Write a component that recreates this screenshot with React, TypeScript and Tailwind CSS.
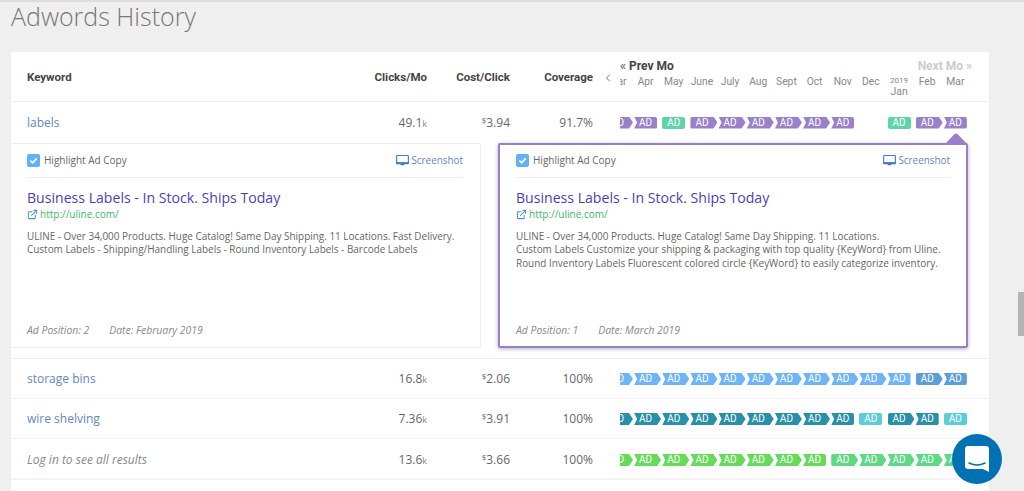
import { ChevronLeft, ExternalLink } from "lucide-react";

const OPEN = "font-['Open_Sans',sans-serif]";
const ROBOTO = "font-['Roboto',sans-serif]";

const shapes: Record<string, string> = {
  s: "w-[23px] rounded-[2px]",
  a: "w-[27px] rounded-l-[2px] [clip-path:polygon(0_0,23px_0,27px_6px,23px_12px,0_12px)]",
  m: "w-[27px] [clip-path:polygon(0_0,23px_0,27px_6px,23px_12px,0_12px,3px_6px)]",
  e: "w-[23px] rounded-r-[2px] [clip-path:polygon(0_0,23px_0,23px_12px,0_12px,3px_6px)]",
};

const colors: Record<string, string> = {
  p: "bg-[#9a80c9]",
  g: "bg-[#5fd4a9]",
  b: "bg-[#6eb4f7]",
  d: "bg-[#5c9fd6]",
  t: "bg-[#2a90a9]",
  l: "bg-[#5ccdd6]",
  v: "bg-[#67da5c]",
  w: "bg-[#5dd884]",
};

const MONTHS = ["Mar", "Apr", "May", "June", "July", "Aug", "Sept", "Oct", "Nov", "Dec", "Jan", "Feb", "Mar"];

function Badge({ spec }: { spec: string }) {
  if (spec === "-") return <div className="w-[28.17px] shrink-0" />;
  return (
    <div className="w-[28.17px] shrink-0">
      <div
        className={`h-3 flex items-center ${ROBOTO} text-[10px] leading-3 text-white ${shapes[spec[0]]} ${colors[spec[1]]}`}
      >
        <span className="w-[23px] text-center">AD</span>
      </div>
    </div>
  );
}

function Badges({ specs }: { specs: string }) {
  return (
    <div className="w-[352px] flex justify-end overflow-hidden">
      {specs.split(" ").map((s, i) => (
        <Badge key={i} spec={s} />
      ))}
    </div>
  );
}

function Row({
  name,
  clicks,
  cost,
  coverage,
  specs,
  muted,
  cls,
}: {
  name: string;
  clicks: string;
  cost: string;
  coverage: string;
  specs: string;
  muted?: boolean;
  cls: string;
}) {
  return (
    <div className={`flex items-center ${OPEN} text-[12px] text-[#666] ${cls}`}>
      <div className="w-[200px] pl-4">
        {muted ? (
          <span className="italic text-[#888]">{name}</span>
        ) : (
          <span className="text-[#6286c6]">{name}</span>
        )}
      </div>
      <div className="w-[216px] text-right">
        {clicks}
        <span className="text-[9px] text-[#888]">k</span>
      </div>
      <div className="w-[83px] text-right">
        <sup className="text-[8px]">$</sup>
        {cost}
      </div>
      <div className="w-[83px] text-right">{coverage}</div>
      <div className="w-[27px]" />
      <Badges specs={specs} />
    </div>
  );
}

function Monitor() {
  return (
    <svg viewBox="0 0 14 12" className="w-[13px] h-[11px]">
      <rect x="0.6" y="0.6" width="12.8" height="8.3" rx="0.8" fill="none" stroke="#3f78c4" strokeWidth="1.2" />
      <path d="M0 8h14v1.2a.8.8 0 0 1-.8.8H.8a.8.8 0 0 1-.8-.8zM5 10h4v1.2H5z" fill="#3f78c4" />
    </svg>
  );
}

function AdPanel({
  lines,
  pos,
  date,
  featured,
}: {
  lines: string[];
  pos: string;
  date: string;
  featured?: boolean;
}) {
  return (
    <div
      className={`relative w-[470px] h-[205px] flex flex-col bg-white ${OPEN} ${
        featured
          ? "border-2 border-[#9a80c9] shadow-[0_1px_4px_rgba(0,0,0,0.3)] rounded-[2px] px-[16px] pt-[8px] pb-[7px]"
          : "border border-[#eeeeee] rounded-r-[2px] border-l-0 pl-4 pr-[17px] pt-[9px] pb-[8px]"
      }`}
    >
      {featured && (
        <svg viewBox="0 0 24 12" className="absolute -top-[12px] right-[-2px] w-6 h-3">
          <path d="M0 12 L10.5 1 Q12 0 13.5 1 L24 12 Z" fill="#9a80c9" />
        </svg>
      )}
      <div className="flex items-center justify-between h-[14px] border-b border-[#eeeeee] pb-[10px] box-content">
        <div className="flex items-center gap-[4px] text-[10px] text-[#666]">
          <span className="w-[13px] h-[13px] rounded-[2px] bg-[#62b1f6] flex items-center justify-center">
            <svg viewBox="0 0 10 10" className="w-[9px] h-[9px]">
              <path d="M1.5 5.2 L4 7.6 L8.6 2.6" fill="none" stroke="#fff" strokeWidth="1.8" />
            </svg>
          </span>
          Highlight Ad Copy
        </div>
        <div className="flex items-center gap-[2px] text-[9.9px] text-[#6286c6]">
          <Monitor />
          Screenshot
        </div>
      </div>
      <div className="mt-[11px] text-[14.1px] leading-[18px] text-[#4b3fb3]">Business Labels - In Stock. Ships Today</div>
      <div className="flex items-center gap-[2px] text-[10px] leading-[14px] text-[#3fb56a]">
        <ExternalLink size={11} strokeWidth={2.2} className="text-[#4f8fd0]" />
        http://uline.com/
      </div>
      <div className="mt-[9px] text-[9.95px] leading-[13.3px] text-[#666]">
        {lines.map((l) => (
          <div key={l}>{l}</div>
        ))}
      </div>
      <div className="mt-auto flex gap-[20px] text-[10.4px] italic text-[#888]">
        <span>Ad Position: {pos}</span>
        <span>Date: {date}</span>
      </div>
    </div>
  );
}

export default function App() {
  return (
    <div className="relative h-[491px] w-[1024px] overflow-hidden bg-[#efefef] border-t-2 border-[#dddddd]">
      <h1 className={`pl-[11px] pt-[2px] h-[50px] ${OPEN} font-light text-[25px] leading-[24px] text-[#777]`}>
        Adwords History
      </h1>

      <div className="ml-[11px] w-[978px] h-[500px] bg-white rounded-t-[2px]">
        <div className={`flex h-[50px] pt-[2px] border-b border-[#eeeeee] ${ROBOTO} text-[11.5px] font-bold text-[#444]`}>
          <div className="w-[200px] pl-4 self-center">Keyword</div>
          <div className="w-[216px] text-right self-center">Clicks/Mo</div>
          <div className="w-[83px] text-right self-center">Cost/Click</div>
          <div className="w-[83px] text-right self-center">Coverage</div>
          <div className="w-[27px] self-center pl-[9px]">
            <ChevronLeft size={12} className="text-[#4f80c8]" strokeWidth={2} />
          </div>
          <div className="w-[352px] pt-[5px]">
            <div className="flex justify-between text-[12px] leading-[14px]">
              <span>
                <span className="text-[#777]">«</span> Prev Mo
              </span>
              <span className="text-[#cccccc]">Next Mo »</span>
            </div>
            <div className="flex justify-end overflow-hidden mt-[2px] font-normal text-[10.3px] leading-[13px] text-[#888]">
              {MONTHS.map((m, i) => (
                <div key={i} className="w-[28.17px] shrink-0">
                  <div className="w-[23px] flex flex-col items-center">
                    {m === "Jan" && <span className="text-[8px] leading-[9px] mt-[1px]">2019</span>}
                    <span className={m === "Jan" ? "text-[10.5px]" : ""}>{m}</span>
                  </div>
                </div>
              ))}
            </div>
          </div>
        </div>

        <Row
          name="labels"
          clicks="49.1"
          cost="3.94"
          coverage="91.7%"
          specs="mp ep sg ap mp mp mp mp ep - sg ap ep"
          cls="h-[41px]"
        />
        <div className="flex gap-[17px] pb-[10px] border-b border-[#eeeeee]">
          <AdPanel
            lines={[
              "ULINE - Over 34,000 Products. Huge Catalog! Same Day Shipping. 11 Locations. Fast Delivery.",
              "Custom Labels - Shipping/Handling Labels - Round Inventory Labels - Barcode Labels",
            ]}
            pos="2"
            date="February 2019"
          />
          <AdPanel
            featured
            lines={[
              "ULINE - Over 34,000 Products. Huge Catalog! Same Day Shipping. 11 Locations.",
              "Custom Labels Customize your shipping & packaging with top quality {KeyWord} from Uline.",
              "Round Inventory Labels Fluorescent colored circle {KeyWord} to easily categorize inventory.",
            ]}
            pos="1"
            date="March 2019"
          />
        </div>
        <Row
          name="storage bins"
          clicks="16.8"
          cost="2.06"
          coverage="100%"
          specs="mb mb mb mb mb mb mb mb mb mb eb ad ed"
          cls="h-[40px] pt-[1px] border-b border-[#f1f1f1]"
        />
        <Row
          name="wire shelving"
          clicks="7.36"
          cost="3.91"
          coverage="100%"
          specs="mt mt mt mt mt mt mt mt et sl at et sl"
          cls="h-[40px] pt-[1px] border-b border-[#f1f1f1]"
        />
        <Row
          name="Log in to see all results"
          muted
          clicks="13.6"
          cost="3.66"
          coverage="100%"
          specs="mv mv mv mv mv mv mv ev aw mw mw mw ew"
          cls="h-[41px] pt-[3px] border-b-2 border-[#f3f3f3]"
        />
      </div>

      <div className="absolute right-0 top-[290px] w-[6px] h-[44px] bg-[#b4b4b4]" />

      <div className="absolute left-[952px] top-[432px] w-[50px] h-[50px] rounded-full bg-[#0071b2] flex items-center justify-center">
        <svg viewBox="0 0 24 26" className="w-[24px] h-[26px]">
          <path d="M3 0h18a3 3 0 0 1 3 3v23l-6-3H3a3 3 0 0 1-3-3V3a3 3 0 0 1 3-3z" fill="#fff" />
          <path d="M4 17 Q12 21 20 17" fill="none" stroke="#0071b2" strokeWidth="1.4" strokeLinecap="round" />
        </svg>
      </div>
    </div>
  );
}
